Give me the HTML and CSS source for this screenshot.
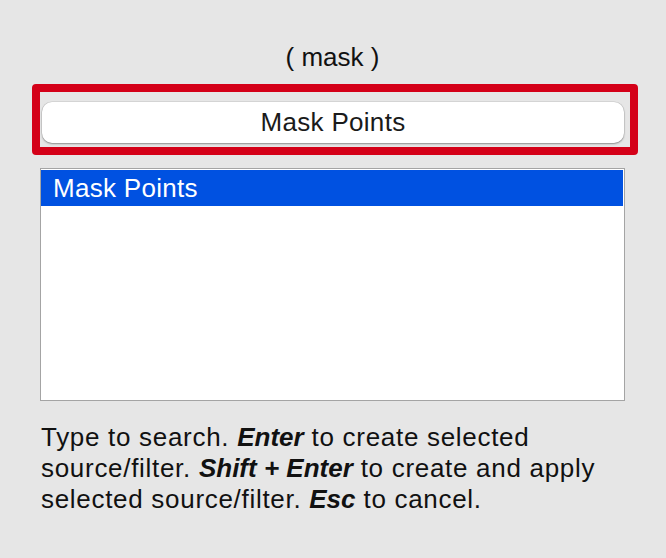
FILE: index.html
```html
<!DOCTYPE html>
<html>
<head>
<meta charset="utf-8">
<link rel="stylesheet" href="styles.css">
</head>
<body>
<div class="panel">
  <div class="title">( mask )</div>
  <div class="highlight">
    <div class="field">Mask Points</div>
  </div>
  <div class="list">
    <div class="row selected">Mask Points</div>
  </div>
  <p class="help">Type to search. <b><i>Enter</i></b> to create selected source/filter. <b><i>Shift + Enter</i></b> to create and apply selected source/filter. <b><i>Esc</i></b> to cancel.</p>
</div>
</body>
</html>
```
FILE: styles.css
```css
html, body {
  margin: 0;
  padding: 0;
  background: #e6e6e6;
}
body {
  width: 666px;
  height: 558px;
  overflow: hidden;
  font-family: "Liberation Sans", Arial, sans-serif;
  color: #111;
}
.panel {
  padding: 42px 41px 0 40px;
  display: flex;
  flex-direction: column;
}
.title {
  text-align: center;
  font-size: 26px;
  line-height: 30px;
  height: 30px;
}
.highlight {
  margin: 12px -13px 0 -8px;
  border: 8px solid #d40018;
  border-radius: 4px;
  padding: 10px 6px 4px 2px;
}
.field {
  height: 41px;
  background: #fff;
  border-radius: 10px;
  box-shadow: 0 1px 2px rgba(0,0,0,0.35), 0 0 0 0.5px rgba(0,0,0,0.12);
  text-align: center;
  font-size: 26px;
  line-height: 40px;
  letter-spacing: 0.3px;
  color: #1a1a1a;
}
.list {
  margin-top: 13px;
  height: 230px;
  background: #fff;
  border: 1px solid #a4a4a4;
  padding: 1px 1px 0 0;
}
.row {
  height: 36px;
  line-height: 36px;
  font-size: 26px;
  letter-spacing: 0.3px;
  padding-left: 12px;
}
.row.selected {
  background: #0051e1;
  color: #fff;
}
.help {
  margin: 21px 0 0 1px;
  font-size: 26px;
  line-height: 31px;
  letter-spacing: 0.7px;
  color: #111;
}
.help b {
  font-weight: bold;
  letter-spacing: 0;
}
```
